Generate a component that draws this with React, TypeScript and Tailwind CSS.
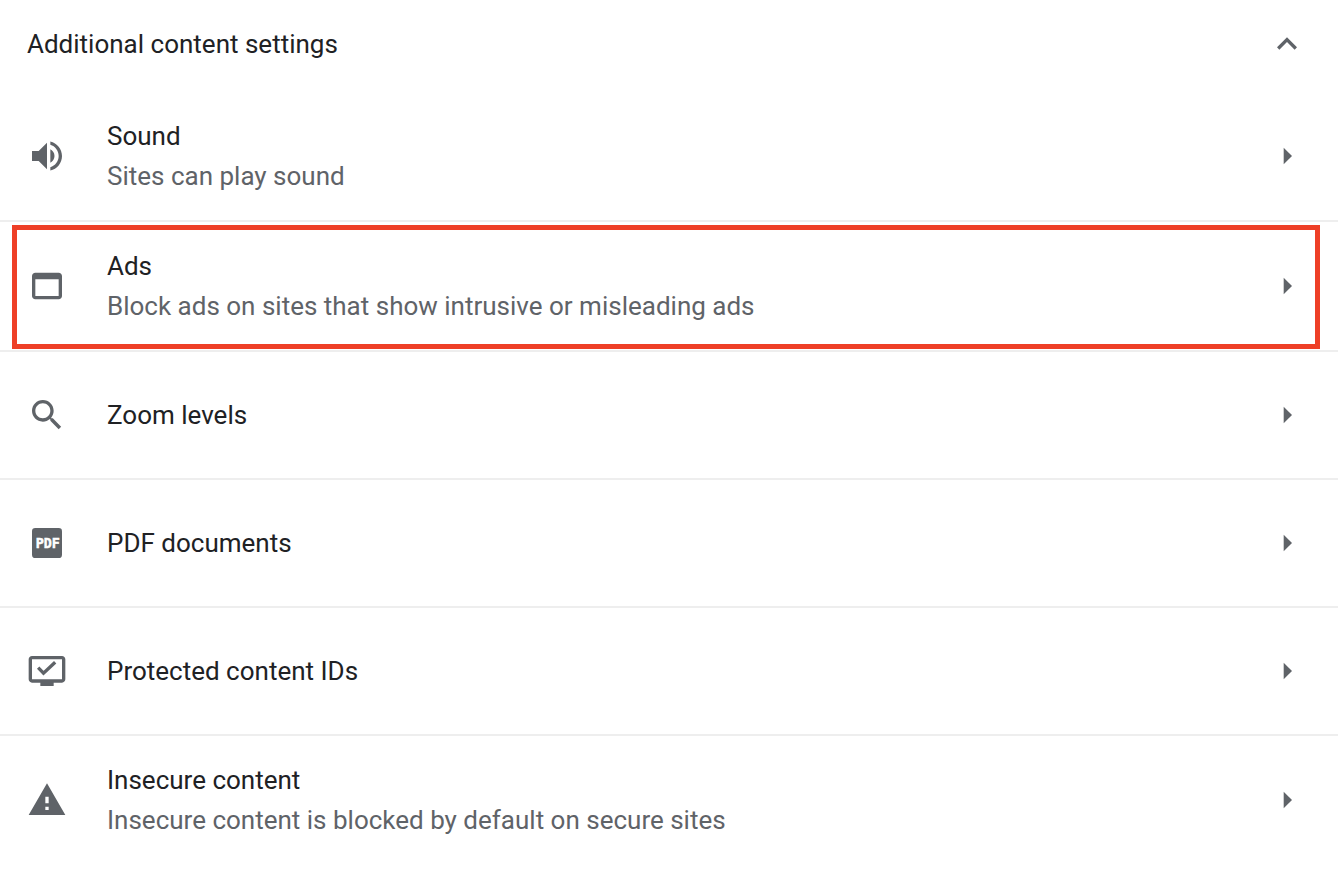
import type { ReactNode } from "react";
import { clsx } from "clsx";

interface Setting {
  title: string;
  description?: string;
  icon: ReactNode;
  highlighted?: boolean;
}

function Icon({ children }: { children: ReactNode }) {
  return (
    <svg
      viewBox="0 0 24 24"
      className="size-10 flex-shrink-0 fill-[#5f6368]"
      aria-hidden="true"
    >
      {children}
    </svg>
  );
}

const SETTINGS: Setting[] = [
  {
    title: "Sound",
    description: "Sites can play sound",
    icon: (
      <path d="M3 9v6h4l5 5V4L7 9H3zm13.5 3c0-1.77-1.02-3.29-2.5-4.03v8.05c1.48-.73 2.5-2.25 2.5-4.02zM14 3.23v2.06c2.89.86 5 3.54 5 6.71s-2.11 5.85-5 6.71v2.06c4.01-.91 7-4.49 7-8.77s-2.99-7.86-7-8.77z" />
    ),
  },
  {
    title: "Ads",
    description: "Block ads on sites that show intrusive or misleading ads",
    icon: (
      <path d="M19 4H5c-1.11 0-2 .9-2 2v12c0 1.1.89 2 2 2h14c1.1 0 2-.9 2-2V6c0-1.1-.89-2-2-2zm0 14H5V8h14v10z" />
    ),
    highlighted: true,
  },
  {
    title: "Zoom levels",
    icon: (
      <path d="M15.5 14h-.79l-.28-.27C15.41 12.59 16 11.11 16 9.5 16 5.91 13.09 3 9.5 3S3 5.91 3 9.5 5.91 16 9.5 16c1.61 0 3.09-.59 4.23-1.57l.27.28v.79l5 4.99L20.49 19l-4.99-5zm-6 0C7.01 14 5 11.99 5 9.5S7.01 5 9.5 5 14 7.01 14 9.5 11.99 14 9.5 14z" />
    ),
  },
  {
    title: "PDF documents",
    icon: (
      <>
        <rect x="3" y="3" width="18" height="18" rx="2" />
        <text
          x="12.4"
          y="15"
          textAnchor="middle"
          fontSize="8"
          fontWeight="700"
          fill="#fff"
          stroke="#fff"
          strokeWidth="0.3"
          className="font-['DejaVu_Sans_Mono',monospace]"
        >
          PDF
        </text>
      </>
    ),
  },
  {
    title: "Protected content IDs",
    icon: (
      <>
        <path d="M21 3H3c-1.11 0-2 .89-2 2v12c0 1.1.89 2 2 2h5v2h8v-2h5c1.1 0 2-.9 2-2V5c0-1.11-.9-2-2-2zm0 14H3V5h18v12z" />
        <path
          d="M6.7 10l3.2 3.3 7-6.6"
          fill="none"
          stroke="#5f6368"
          strokeWidth="2"
        />
      </>
    ),
  },
  {
    title: "Insecure content",
    description: "Insecure content is blocked by default on secure sites",
    icon: (
      <path d="M1 21h22L12 2 1 21zm12-3h-2v-2h2v2zm0-4h-2v-4h2v4z" />
    ),
  },
];

function SettingRow({ setting }: { setting: Setting }) {
  return (
    <li className="relative border-b-2 border-[#eeeeee] last:border-0">
      <button
        type="button"
        className={clsx(
          "flex w-full cursor-pointer items-center pr-[31px] pl-[27px] text-left",
          setting.description ? "py-6" : "py-[43px]",
        )}
      >
        <Icon>{setting.icon}</Icon>
        <span className="ml-10 min-w-0 flex-1">
          <span className="block">{setting.title}</span>
          {setting.description && (
            <span className="block text-[#5f6368]">{setting.description}</span>
          )}
        </span>
        <Icon>
          <path d="M10 7l5 5-5 5z" />
        </Icon>
      </button>
      {setting.highlighted && (
        <div className="pointer-events-none absolute top-[3px] right-[18px] bottom-px left-3 border-5 border-[#ee3f27]" />
      )}
    </li>
  );
}

export default function App() {
  return (
    <main className="min-h-screen bg-white font-[Roboto,sans-serif] text-[26px] leading-10 text-[#202124]">
      <h2 className="pb-1">
        <button
          type="button"
          aria-expanded="true"
          className="flex w-full cursor-pointer items-center justify-between py-6 pr-[31px] pl-[27px] text-left"
        >
          Additional content settings
          <Icon>
            <path d="M12 8l-6 6 1.41 1.41L12 10.83l4.59 4.58L18 14z" />
          </Icon>
        </button>
      </h2>
      <ul>
        {SETTINGS.map((setting) => (
          <SettingRow key={setting.title} setting={setting} />
        ))}
      </ul>
    </main>
  );
}
